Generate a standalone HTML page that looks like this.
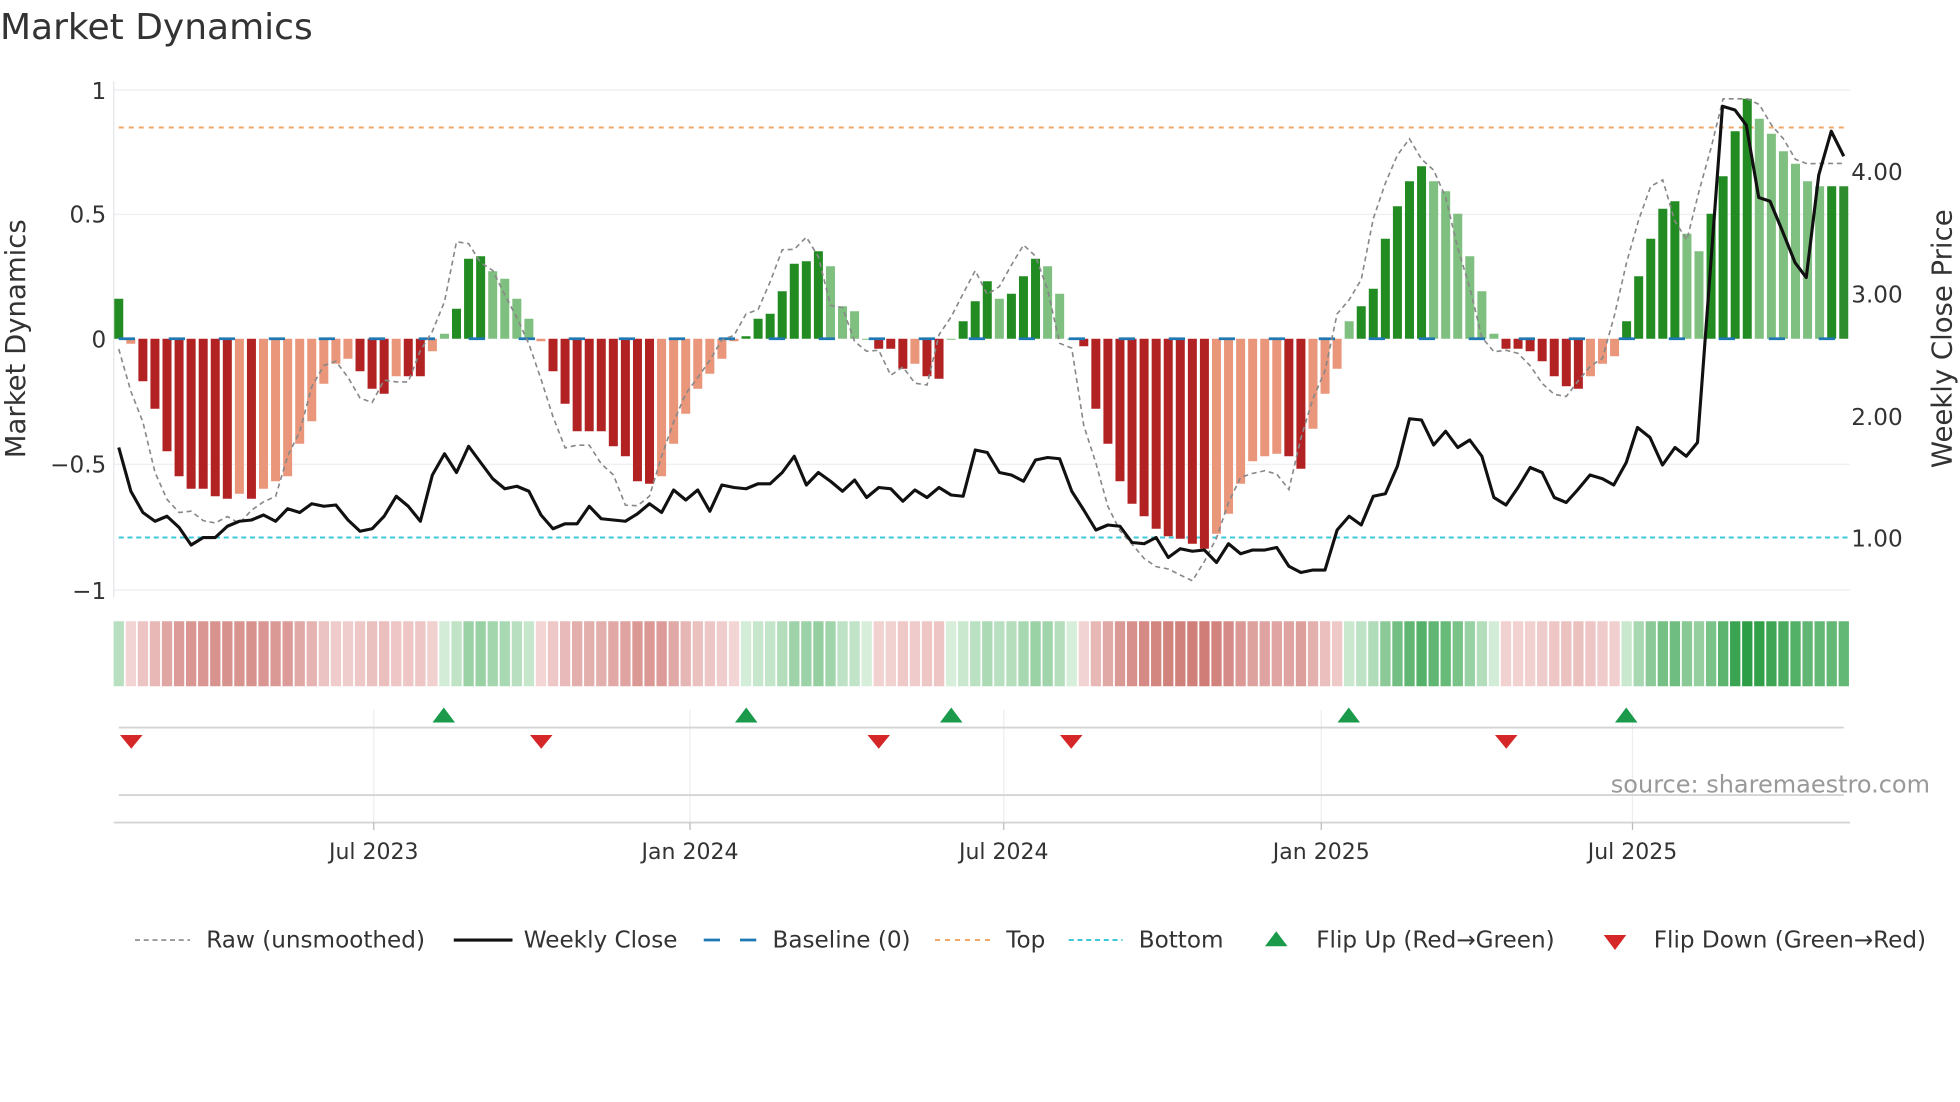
<!DOCTYPE html>
<html><head><meta charset="utf-8"><style>
html,body{margin:0;padding:0;background:#fff;}
svg{display:block;}
text{font-family:"DejaVu Sans","Liberation Sans",sans-serif;}
</style></head><body>
<svg id="s" width="1960" height="1102" viewBox="0 0 1568 881.6" xmlns="http://www.w3.org/2000/svg">
<text x="0" y="31" font-size="28.8" fill="#333">Market Dynamics</text>
<g stroke="#eef0f4" stroke-width="1.2">
<line x1="91" x2="1480" y1="72" y2="72"/><line x1="91" x2="1480" y1="171.5" y2="171.5"/>
<line x1="91" x2="1480" y1="371.5" y2="371.5"/><line x1="91" x2="1480" y1="472" y2="472"/>
</g>
<line x1="91" x2="91" y1="65" y2="478" stroke="#e4e6ea" stroke-width="1"/>
<g font-size="18.5" fill="#333" text-anchor="end">
<text x="85" y="79">1</text><text x="85" y="178">0.5</text><text x="85" y="278">0</text>
<text x="85" y="378">−0.5</text><text x="85" y="479">−1</text>
</g>
<g font-size="18.5" fill="#333">
<text x="1481" y="144">4.00</text><text x="1481" y="242">3.00</text><text x="1481" y="340">2.00</text><text x="1481" y="437">1.00</text>
</g>
<text transform="translate(20,271) rotate(-90)" font-size="22" fill="#333" text-anchor="middle">Market Dynamics</text>
<text transform="translate(1561,271) rotate(-90)" font-size="22" fill="#333" text-anchor="middle">Weekly Close Price</text>
<line x1="95" x2="1478" y1="102" y2="102" stroke="#f0a868" stroke-width="1.6" stroke-dasharray="4,4"/>
<line x1="95" x2="1478" y1="430" y2="430" stroke="#3cc8d8" stroke-width="1.6" stroke-dasharray="4,3"/>
<g id="bars"></g>
<line x1="95" x2="1478" y1="271" y2="271" stroke="#1f77b4" stroke-width="2.2" stroke-dasharray="13,27"/>
<polyline id="raw" fill="none" stroke="#888" stroke-width="1.3" stroke-dasharray="4,3"/>
<polyline id="price" fill="none" stroke="#111" stroke-width="2.5" stroke-linejoin="round"/>
<g id="heat"></g>
<g stroke="#eceef2" stroke-width="1"><line x1="299" x2="299" y1="568" y2="658"/><line x1="552" x2="552" y1="568" y2="658"/><line x1="803" x2="803" y1="568" y2="658"/><line x1="1057" x2="1057" y1="568" y2="658"/><line x1="1306" x2="1306" y1="568" y2="658"/></g>
<line x1="95" x2="1475" y1="582" y2="582" stroke="#d4d4d4" stroke-width="1.5"/>
<line x1="95" x2="1475" y1="636" y2="636" stroke="#d4d4d4" stroke-width="1.5"/>
<line x1="91" x2="1480" y1="658" y2="658" stroke="#d4d4d4" stroke-width="1.5"/>
<g stroke="#bbb"><line x1="299" x2="299" y1="658" y2="664"/><line x1="552" x2="552" y1="658" y2="664"/><line x1="803" x2="803" y1="658" y2="664"/><line x1="1057" x2="1057" y1="658" y2="664"/><line x1="1306" x2="1306" y1="658" y2="664"/></g>
<g id="tri"></g>
<text x="1544" y="634" font-size="19.2" fill="#999" text-anchor="end">source: sharemaestro.com</text>
<g font-size="17.6" fill="#333" text-anchor="middle">
<text x="299" y="687">Jul 2023</text><text x="552" y="687">Jan 2024</text><text x="803" y="687">Jul 2024</text><text x="1057" y="687">Jan 2025</text><text x="1306" y="687">Jul 2025</text>
</g>
<g font-size="18.5" fill="#333">
<line x1="108" x2="152" y1="752" y2="752" stroke="#888" stroke-width="1.3" stroke-dasharray="4,3"/><text x="165" y="758">Raw (unsmoothed)</text>
<line x1="363" x2="410" y1="752" y2="752" stroke="#111" stroke-width="2.5"/><text x="419" y="758">Weekly Close</text>
<line x1="563" x2="606" y1="752" y2="752" stroke="#1f77b4" stroke-width="2.2" stroke-dasharray="13,16"/><text x="618" y="758">Baseline (0)</text>
<line x1="748" x2="792" y1="752" y2="752" stroke="#f0a868" stroke-width="1.6" stroke-dasharray="4,4"/><text x="805" y="758">Top</text>
<line x1="855" x2="898" y1="752" y2="752" stroke="#3cc8d8" stroke-width="1.6" stroke-dasharray="4,3"/><text x="911" y="758">Bottom</text>
<polygon points="1012,757 1030,757 1021,745" fill="#1a9a4a"/><text x="1053" y="758">Flip Up (Red→Green)</text>
<polygon points="1283,748 1301,748 1292,760" fill="#d62728"/><text x="1323" y="758">Flip Down (Green→Red)</text>
</g>
</svg>
<script>
var v=[0.16,-0.02,-0.17,-0.28,-0.45,-0.55,-0.6,-0.6,-0.63,-0.64,-0.62,-0.64,-0.6,-0.57,-0.55,-0.42,-0.33,-0.18,-0.1,-0.08,-0.13,-0.2,-0.22,-0.15,-0.15,-0.15,-0.05,
0.02,0.12,0.32,0.33,0.27,0.24,0.16,0.08,-0.01,-0.13,-0.26,-0.37,-0.37,-0.37,-0.43,-0.47,-0.57,-0.58,-0.55,-0.42,-0.3,-0.2,-0.14,-0.08,-0.01,0.01,0.08,0.1,0.19,0.3,0.31,0.35,0.29,0.13,0.11,0.0,-0.04,-0.04,-0.12,-0.1,-0.15,-0.16,-0.0,0.07,0.15,0.23,0.16,0.18,0.25,0.32,0.29,0.18,0.0,-0.03,-0.28,-0.42,-0.57,-0.66,-0.71,-0.76,-0.79,-0.8,-0.82,-0.84,-0.78,-0.7,-0.58,-0.49,-0.47,-0.46,-0.47,-0.52,-0.36,-0.22,-0.12,0.07,0.13,0.2,0.4,0.53,0.63,0.69,0.63,0.59,0.5,0.33,0.19,0.02,-0.04,-0.04,-0.05,-0.09,-0.15,-0.19,-0.2,-0.15,-0.1,-0.07,0.07,0.25,0.4,0.52,0.55,0.42,0.35,0.5,0.65,0.83,0.96,0.88,0.82,0.75,0.7,0.63,0.61,0.61,0.61];
var n=v.length,step=(1475-95)/(n-1),NS="http://www.w3.org/2000/svg";
function el(t,a,p){var e=document.createElementNS(NS,t);for(var k in a)e.setAttribute(k,a[k]);p.appendChild(e);return e;}
var bars=document.getElementById('bars'),heat=document.getElementById('heat');
for(var i=0;i<n;i++){var x=95+i*step,val=v[i],prev=i>0?v[i-1]:0;
var inc=Math.abs(val)>=Math.abs(prev)-0.005;
var c=val>=0?(inc?'#228b22':'#7fbf7f'):(inc?'#b22222':'#e9967a');
if(i==n-1)c='#2e8b2e';
var h=Math.abs(val)*200;el('rect',{x:x-3.6,y:val>=0?271-h:271,width:7.2,height:Math.max(h,0.8),fill:c},bars);
var a=Math.min(1,Math.abs(val)/0.9),col;
if(val>=0){var r=Math.round(214-(214-46)*a),g=Math.round(238-(238-158)*a),b=Math.round(218-(218-70)*a);col='rgb('+r+','+g+','+b+')';}
else{var r=Math.round(243-(243-205)*a),g=Math.round(214-(214-118)*a),b=Math.round(214-(214-112)*a);col='rgb('+r+','+g+','+b+')';}
el('rect',{x:x-4.1,y:497,width:step-1.4,height:52,fill:col},heat);}
var rp=[];for(var i=0;i<n;i++){var a=v[Math.min(i+1,n-1)],b=v[i];var r=1.25*a-0.1*b;r=Math.max(-0.97,Math.min(0.96,r));rp.push((95+i*step).toFixed(1)+','+(271-r*200).toFixed(1));}
document.getElementById('raw').setAttribute('points',rp.join(' '));
var py=[358,393,410,417,413,422,436,430,430,421,417,416,412,417,407,410,403,405,404,416,425,423,413,397,405,417,380,363,378,357,370,383,391,389,393,412,423,419,419,405,415,416,417,411,403,410,392,400,392,409,388,390,391,387,387,378,365,388,378,385,393,384,398,390,391,401,392,398,390,396,397,360,362,378,380,385,368,366,367,393,408,424,420,421,434,435,430,446,439,441,440,450,435,443,440,440,438,453,458,456,456,424,413,420,397,395,373,335,336,356,345,358,352,365,398,404,390,374,378,398,402];
var pp=[];for(var i=0;i<py.length;i++)pp.push((95+i*step).toFixed(1)+','+py[i]);
pp=pp.concat(['1262,392','1272,380','1282,383','1291,388','1301,370','1310,342','1320,350','1330,372','1340,358','1349,365','1358,354','1378,85','1388,88','1397,100','1407,158','1416,161','1426,185','1436,210','1445,222','1455,140','1465,105','1475,125']);
document.getElementById('price').setAttribute('points',pp.join(' '));
var tri=document.getElementById('tri');
[355,597,761,1079,1301].forEach(function(x){el('polygon',{points:(x-9)+',578 '+(x+9)+',578 '+x+',566',fill:'#1a9a4a'},tri);});
[105,433,703,857,1205].forEach(function(x){el('polygon',{points:(x-9)+',588 '+(x+9)+',588 '+x+',599',fill:'#d62728'},tri);});
</script>
</body></html>
